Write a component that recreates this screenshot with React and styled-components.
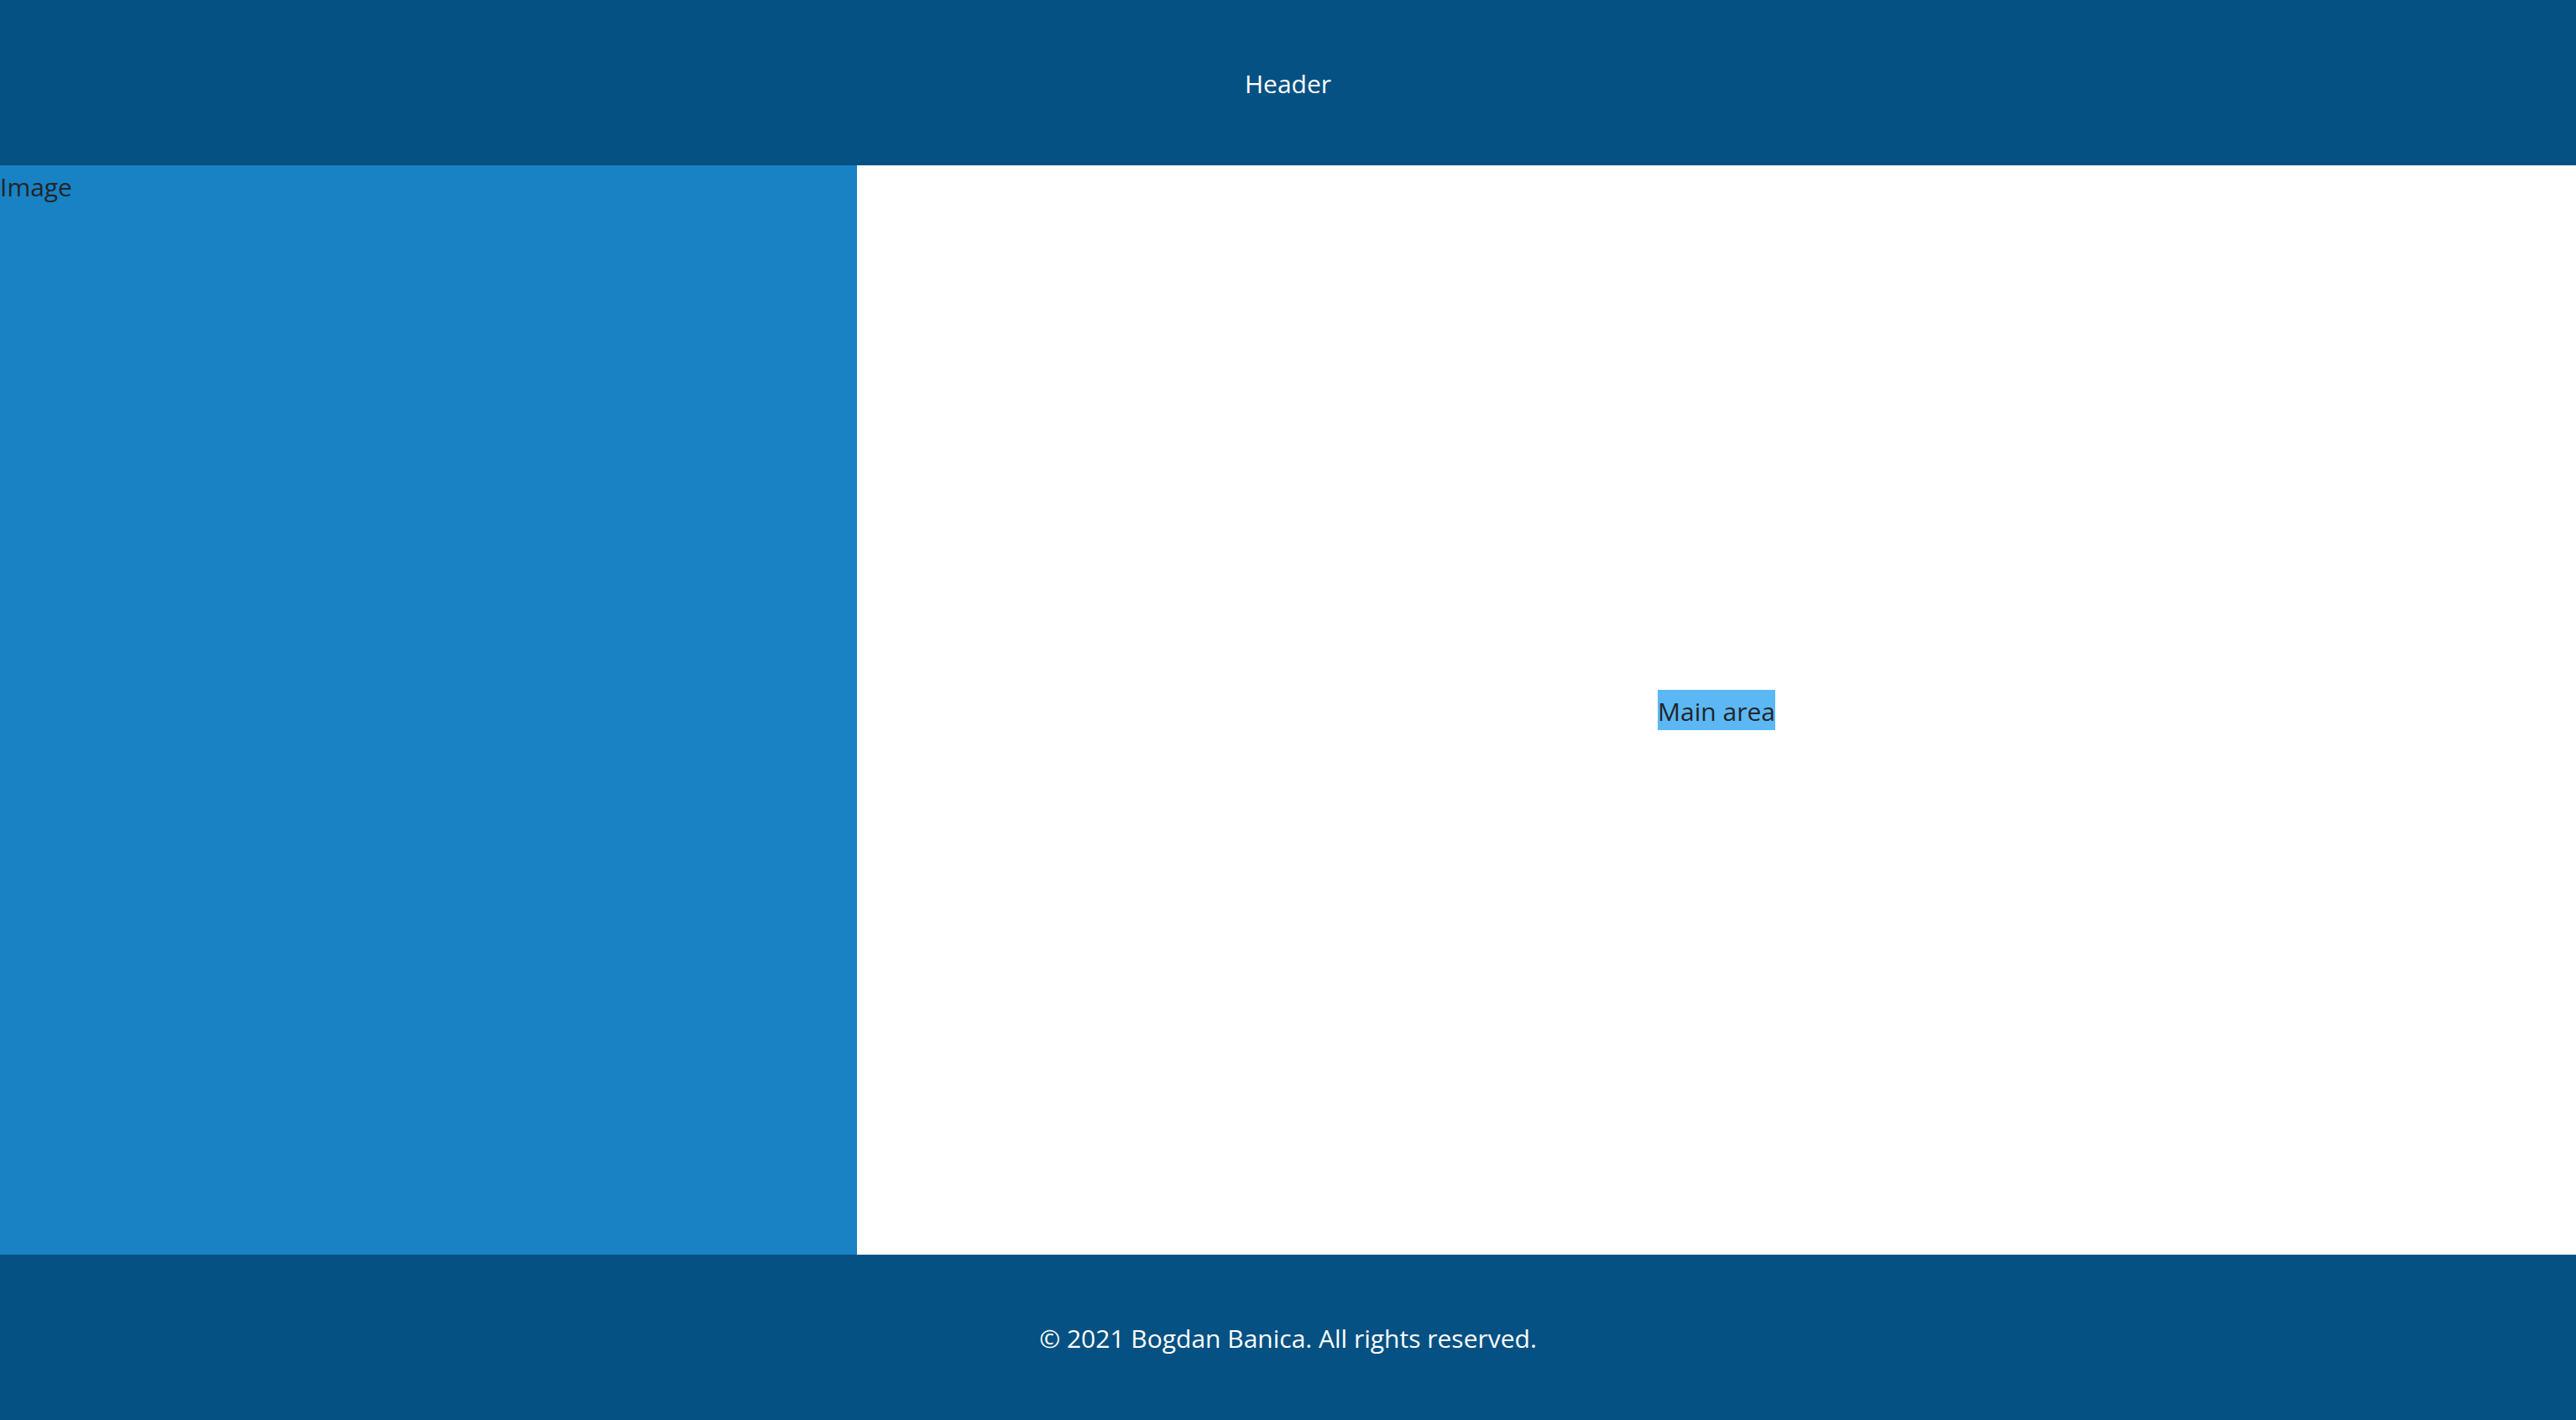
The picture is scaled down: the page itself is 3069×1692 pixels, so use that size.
import styled, { createGlobalStyle } from "styled-components";

const GlobalStyle = createGlobalStyle`
    * {
        box-sizing: border-box;
    }

    body {
        margin: 0;
        font-family: "Open Sans", "Noto Sans", sans-serif;
        font-size: 30px;
        line-height: 48px;
        color: #212529;
    }
`;

export default function App(){
    return (
        <>
            <GlobalStyle />
            <Layout>
                <Header>Header</Header>
                <ImageArea>Image</ImageArea>
                <MainArea>
                    <Highlight>Main area</Highlight>
                </MainArea>
                <Footer>© 2021 Bogdan Banica. All rights reserved.</Footer>
            </Layout>
        </>
    );
}

const Layout = styled.div`
    width: 100%;
    height: 100vh;

    display: grid;
    grid-template-columns: 1021px 1fr;
    grid-template-rows: 197px 1fr 197px;
`;

const Header = styled.header`
    grid-column: 1 / 3;

    display: flex;
    justify-content: center;
    align-items: center;

    padding-top: 3px;
    background: #055183;
    color: #fff;
`;

const ImageArea = styled.aside`
    padding-top: 2px;
    background: #1882c4;
`;

const MainArea = styled.main`
    display: flex;
    justify-content: center;
    align-items: center;

    background: #fff;
`;

const Highlight = styled.span`
    display: inline-block;
    padding-top: 2px;
    height: 48px;
    background: #5cb8f5;
`;

const Footer = styled.footer`
    grid-column: 1 / 3;

    display: flex;
    justify-content: center;
    align-items: center;

    padding-top: 3px;
    background: #055183;
    color: #fff;
`;
